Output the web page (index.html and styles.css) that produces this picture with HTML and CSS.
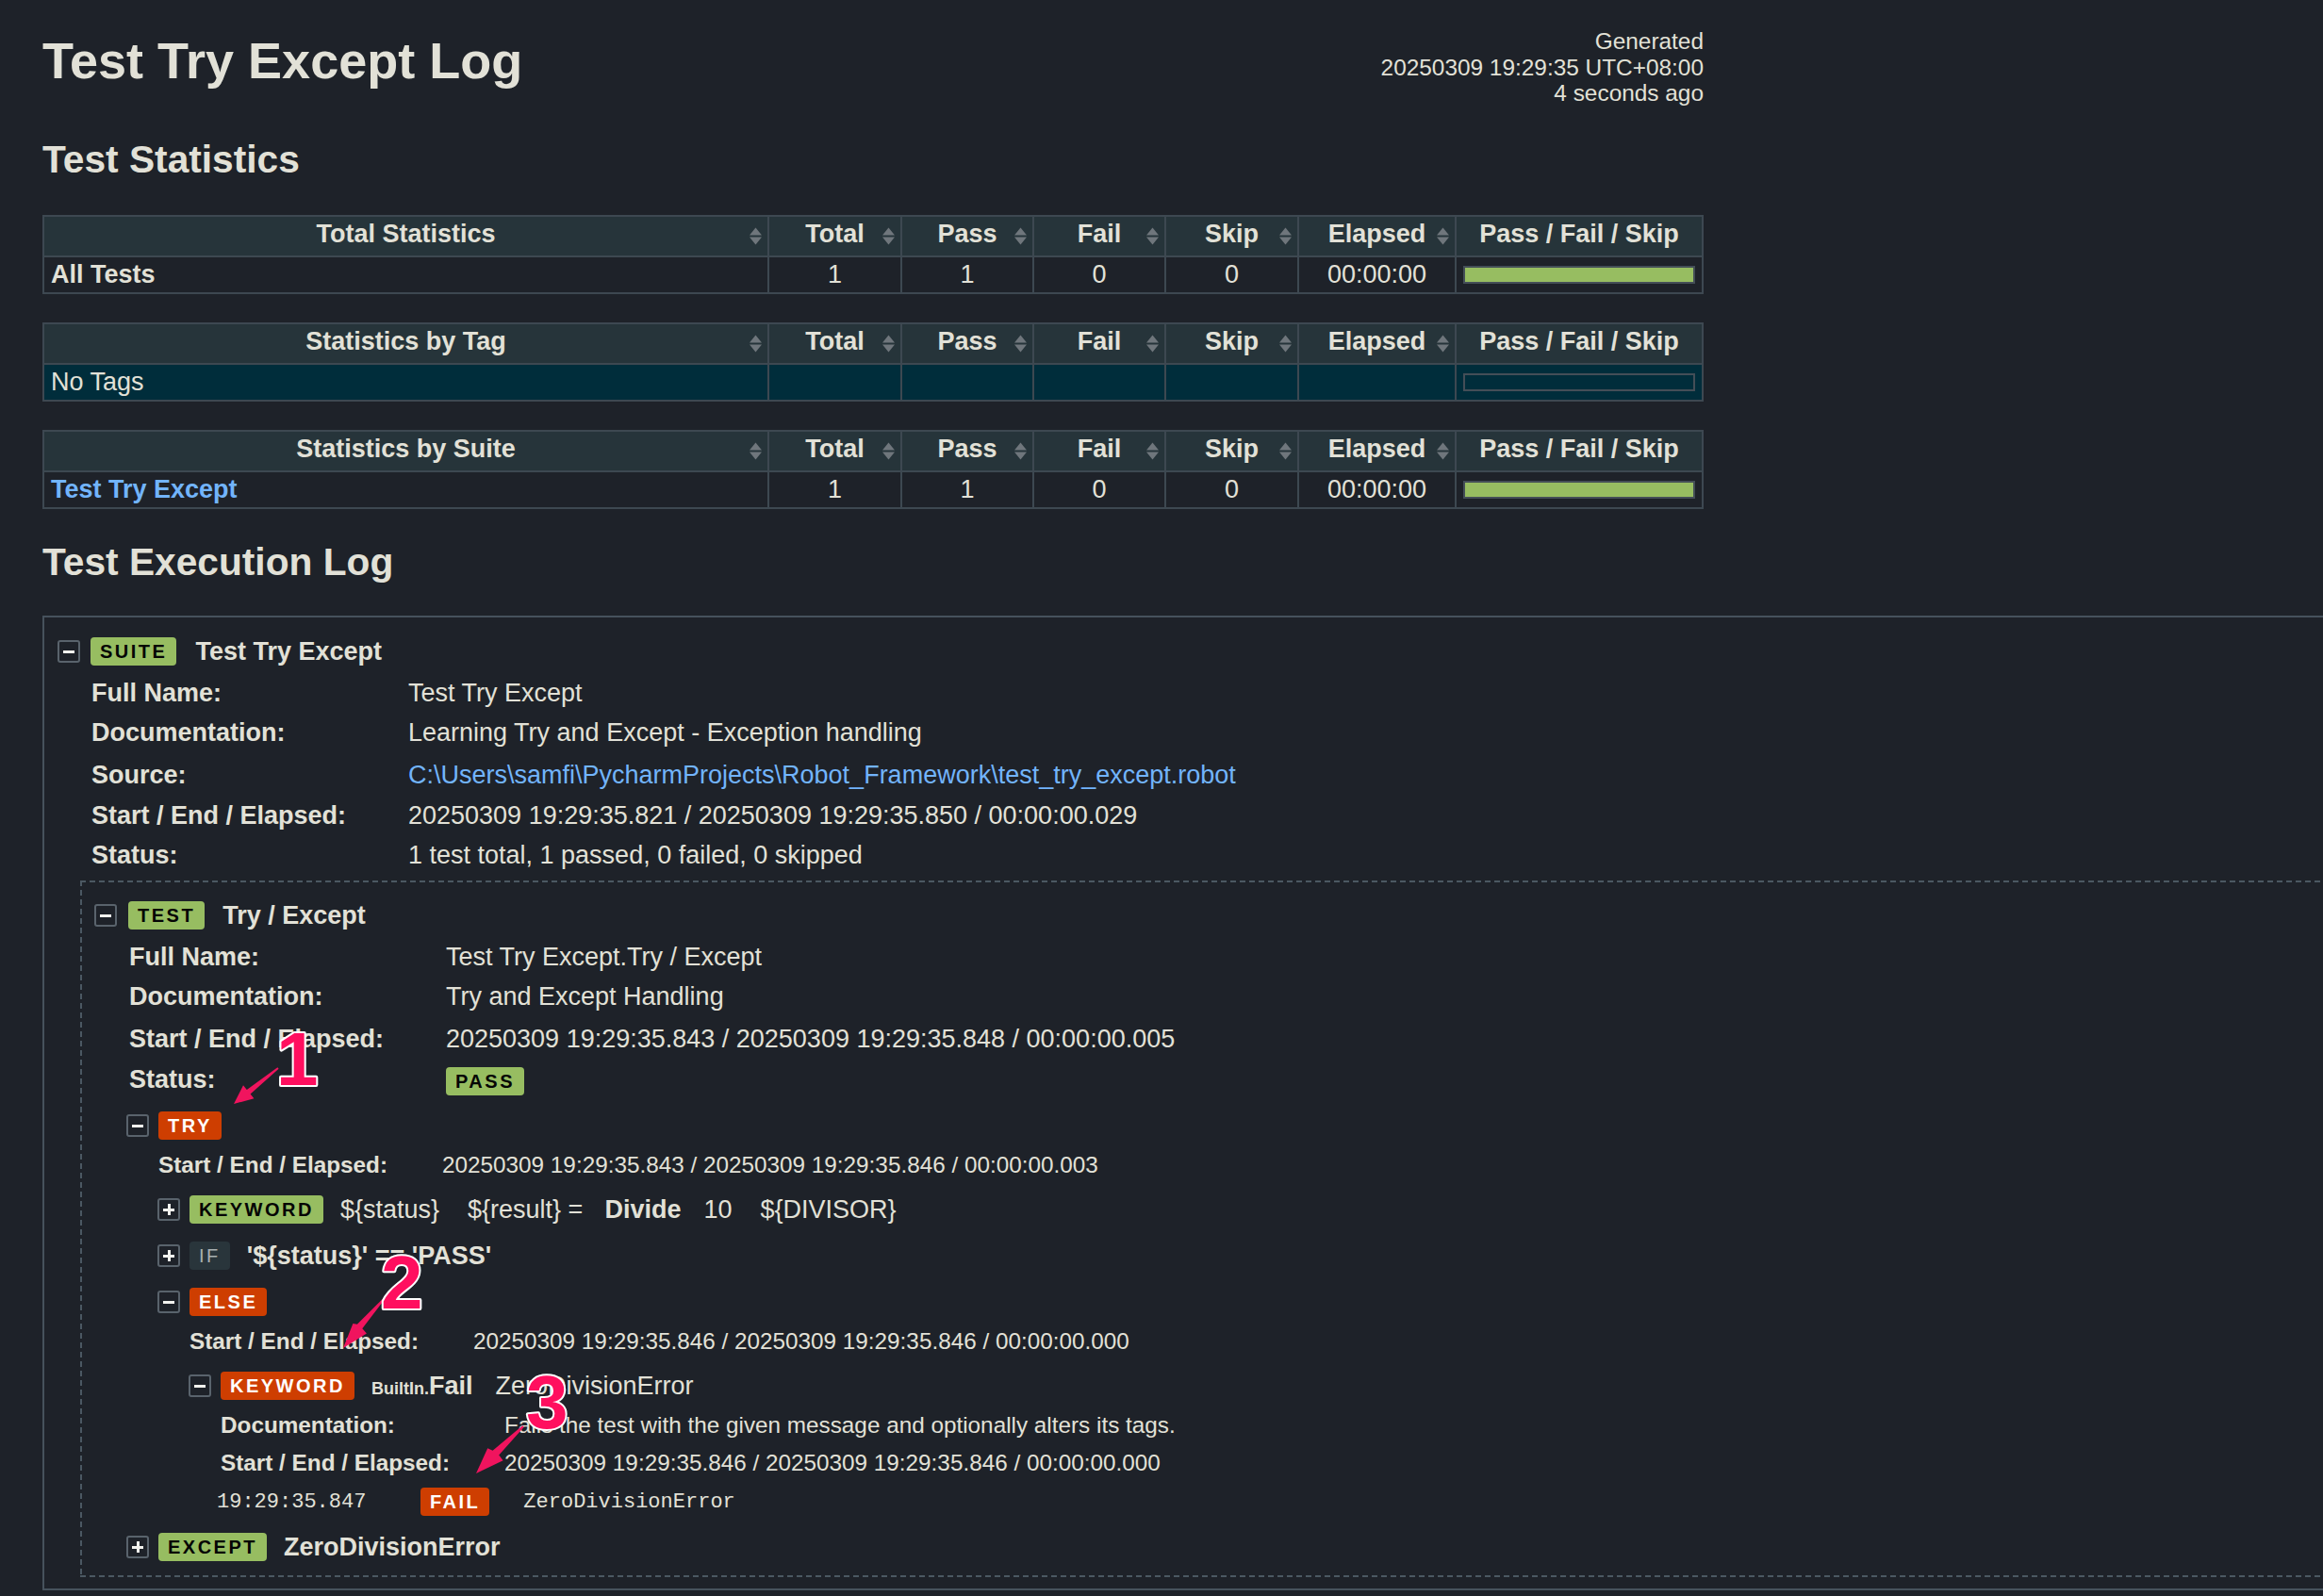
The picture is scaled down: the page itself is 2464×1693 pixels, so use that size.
FILE: index.html
```html
<!DOCTYPE html>
<html lang="en">
<head>
<meta charset="utf-8">
<title>Test Try Except Log</title>
<link rel="stylesheet" href="styles.css">
</head>
<body>
<div class="header">
  <h1>Test Try Except Log</h1>
  <div class="generated">Generated<br>20250309 19:29:35 UTC+08:00<br>4 seconds ago</div>
</div>

<h2 class="h-stats">Test Statistics</h2>

<table class="statistics">
  <colgroup><col><col class="c-a"><col class="c-b"><col class="c-b"><col class="c-a"><col class="c-el"><col class="c-graph"></colgroup>
  <thead><tr>
    <th>Total Statistics<svg class="sort" viewBox="0 0 15 19"><path d="M1 8.5L7.5 0.5 14 8.5zM1 10.5L7.5 18.5 14 10.5z"/></svg></th>
    <th>Total<svg class="sort" viewBox="0 0 15 19"><path d="M1 8.5L7.5 0.5 14 8.5zM1 10.5L7.5 18.5 14 10.5z"/></svg></th>
    <th>Pass<svg class="sort" viewBox="0 0 15 19"><path d="M1 8.5L7.5 0.5 14 8.5zM1 10.5L7.5 18.5 14 10.5z"/></svg></th>
    <th>Fail<svg class="sort" viewBox="0 0 15 19"><path d="M1 8.5L7.5 0.5 14 8.5zM1 10.5L7.5 18.5 14 10.5z"/></svg></th>
    <th>Skip<svg class="sort" viewBox="0 0 15 19"><path d="M1 8.5L7.5 0.5 14 8.5zM1 10.5L7.5 18.5 14 10.5z"/></svg></th>
    <th>Elapsed<svg class="sort" viewBox="0 0 15 19"><path d="M1 8.5L7.5 0.5 14 8.5zM1 10.5L7.5 18.5 14 10.5z"/></svg></th>
    <th>Pass / Fail / Skip</th>
  </tr></thead>
  <tbody><tr>
    <td class="stat-name"><b>All Tests</b></td><td>1</td><td>1</td><td>0</td><td>0</td><td>00:00:00</td><td><div class="graph"></div></td>
  </tr></tbody>
</table>

<table class="statistics">
  <colgroup><col><col class="c-a"><col class="c-b"><col class="c-b"><col class="c-a"><col class="c-el"><col class="c-graph"></colgroup>
  <thead><tr>
    <th>Statistics by Tag<svg class="sort" viewBox="0 0 15 19"><path d="M1 8.5L7.5 0.5 14 8.5zM1 10.5L7.5 18.5 14 10.5z"/></svg></th>
    <th>Total<svg class="sort" viewBox="0 0 15 19"><path d="M1 8.5L7.5 0.5 14 8.5zM1 10.5L7.5 18.5 14 10.5z"/></svg></th>
    <th>Pass<svg class="sort" viewBox="0 0 15 19"><path d="M1 8.5L7.5 0.5 14 8.5zM1 10.5L7.5 18.5 14 10.5z"/></svg></th>
    <th>Fail<svg class="sort" viewBox="0 0 15 19"><path d="M1 8.5L7.5 0.5 14 8.5zM1 10.5L7.5 18.5 14 10.5z"/></svg></th>
    <th>Skip<svg class="sort" viewBox="0 0 15 19"><path d="M1 8.5L7.5 0.5 14 8.5zM1 10.5L7.5 18.5 14 10.5z"/></svg></th>
    <th>Elapsed<svg class="sort" viewBox="0 0 15 19"><path d="M1 8.5L7.5 0.5 14 8.5zM1 10.5L7.5 18.5 14 10.5z"/></svg></th>
    <th>Pass / Fail / Skip</th>
  </tr></thead>
  <tbody><tr class="row-empty">
    <td class="stat-name">No Tags</td><td></td><td></td><td></td><td></td><td></td><td><div class="graph empty"></div></td>
  </tr></tbody>
</table>

<table class="statistics">
  <colgroup><col><col class="c-a"><col class="c-b"><col class="c-b"><col class="c-a"><col class="c-el"><col class="c-graph"></colgroup>
  <thead><tr>
    <th>Statistics by Suite<svg class="sort" viewBox="0 0 15 19"><path d="M1 8.5L7.5 0.5 14 8.5zM1 10.5L7.5 18.5 14 10.5z"/></svg></th>
    <th>Total<svg class="sort" viewBox="0 0 15 19"><path d="M1 8.5L7.5 0.5 14 8.5zM1 10.5L7.5 18.5 14 10.5z"/></svg></th>
    <th>Pass<svg class="sort" viewBox="0 0 15 19"><path d="M1 8.5L7.5 0.5 14 8.5zM1 10.5L7.5 18.5 14 10.5z"/></svg></th>
    <th>Fail<svg class="sort" viewBox="0 0 15 19"><path d="M1 8.5L7.5 0.5 14 8.5zM1 10.5L7.5 18.5 14 10.5z"/></svg></th>
    <th>Skip<svg class="sort" viewBox="0 0 15 19"><path d="M1 8.5L7.5 0.5 14 8.5zM1 10.5L7.5 18.5 14 10.5z"/></svg></th>
    <th>Elapsed<svg class="sort" viewBox="0 0 15 19"><path d="M1 8.5L7.5 0.5 14 8.5zM1 10.5L7.5 18.5 14 10.5z"/></svg></th>
    <th>Pass / Fail / Skip</th>
  </tr></thead>
  <tbody><tr>
    <td class="stat-name"><a class="link-bold" href="#s1">Test Try Except</a></td><td>1</td><td>1</td><td>0</td><td>0</td><td>00:00:00</td><td><div class="graph"></div></td>
  </tr></tbody>
</table>

<h2 class="h-exec">Test Execution Log</h2>

<div class="suite" id="s1">
  <div class="el-head suite-head">
    <span class="toggle"></span><span class="label pass">SUITE</span><span class="name">Test Try Except</span>
  </div>
  <div class="suite-body">
    <table class="metadata">
      <tr><th>Full Name:</th><td>Test Try Except</td></tr>
      <tr class="doc"><th>Documentation:</th><td>Learning Try and Except - Exception handling</td></tr>
      <tr><th>Source:</th><td><a href="#s1">C:\Users\samfi\PycharmProjects\Robot_Framework\test_try_except.robot</a></td></tr>
      <tr><th>Start / End / Elapsed:</th><td>20250309 19:29:35.821 / 20250309 19:29:35.850 / 00:00:00.029</td></tr>
      <tr><th>Status:</th><td>1 test total, 1 passed, 0 failed, 0 skipped</td></tr>
    </table>

    <div class="test">
      <div class="el-head test-head">
        <span class="toggle"></span><span class="label pass">TEST</span><span class="name">Try / Except</span>
      </div>
      <table class="metadata">
        <tr><th>Full Name:</th><td>Test Try Except.Try / Except</td></tr>
        <tr class="doc"><th>Documentation:</th><td>Try and Except Handling</td></tr>
        <tr><th>Start / End / Elapsed:</th><td>20250309 19:29:35.843 / 20250309 19:29:35.848 / 00:00:00.005</td></tr>
        <tr><th>Status:</th><td><span class="label pass">PASS</span></td></tr>
      </table>

      <div class="test-children">
        <div class="kw">
          <div class="el-head kw-head">
            <span class="toggle"></span><span class="label fail">TRY</span>
          </div>
          <table class="metadata kw-meta">
            <tr><th>Start / End / Elapsed:</th><td>20250309 19:29:35.843 / 20250309 19:29:35.846 / 00:00:00.003</td></tr>
          </table>
          <div class="kw-children">
            <div class="kw">
              <div class="el-head kw-head">
                <span class="toggle plus"></span><span class="label pass">KEYWORD</span><span class="kw-text"><span class="assign">${status}    ${result} =</span><span class="kname">Divide</span><span class="args">10    ${DIVISOR}</span></span>
              </div>
            </div>
            <div class="kw">
              <div class="el-head kw-head">
                <span class="toggle plus"></span><span class="label ctrl">IF</span><span class="kw-text"><span class="kname first">'${status}' == 'PASS'</span></span>
              </div>
            </div>
            <div class="kw">
              <div class="el-head kw-head">
                <span class="toggle"></span><span class="label fail">ELSE</span>
              </div>
              <table class="metadata kw-meta">
                <tr><th>Start / End / Elapsed:</th><td>20250309 19:29:35.846 / 20250309 19:29:35.846 / 00:00:00.000</td></tr>
              </table>
              <div class="kw-children">
                <div class="kw">
                  <div class="el-head kw-head">
                    <span class="toggle"></span><span class="label fail">KEYWORD</span><span class="kw-text"><span class="kname first"><span class="parent">BuiltIn.</span>Fail</span><span class="args">ZeroDivisionError</span></span>
                  </div>
                  <table class="metadata kw-meta">
                    <tr><th>Documentation:</th><td>Fails the test with the given message and optionally alters its tags.</td></tr>
                    <tr><th>Start / End / Elapsed:</th><td>20250309 19:29:35.846 / 20250309 19:29:35.846 / 00:00:00.000</td></tr>
                  </table>
                  <div class="msg">
                    <span class="time">19:29:35.847</span><span class="label fail">FAIL</span><span class="msg-text">ZeroDivisionError</span>
                  </div>
                </div>
              </div>
            </div>
          </div>
        </div>
        <div class="kw">
          <div class="el-head kw-head">
            <span class="toggle plus"></span><span class="label pass">EXCEPT</span><span class="kw-text"><span class="kname first">ZeroDivisionError</span></span>
          </div>
        </div>
      </div>
    </div>
  </div>
</div>

<svg class="annotations" viewBox="0 0 2464 1693" width="2464" height="1693">
  <polygon class="arrow" points="295.6,1133.8 265.6,1160.6 269.4,1165.3 248,1171 258,1151.3 261.8,1156 294.4,1132.2"/>
  <polygon class="arrow" points="407.8,1378.6 384.3,1409.2 388.9,1414.5 364,1430 374.4,1403.9 378.9,1404.7 406.2,1377.4"/>
  <polygon class="arrow" points="555.8,1513.7 529.2,1543.5 533.6,1549.2 505,1563 517.2,1536.3 522.6,1538.7 554.2,1512.3"/>
  <text class="num" x="293" y="1151">1</text>
  <text class="num" x="404" y="1388">2</text>
  <text class="num" x="558" y="1515">3</text>
</svg>
</body>
</html>
```

FILE: styles.css
```css
* {
  box-sizing: border-box;
}

html {
  overflow: hidden;
}

html, body {
  margin: 0;
}

body {
  position: relative;
  background: #1e2229;
  color: #e2e1d7;
  font-family: "Liberation Sans", Arial, Helvetica, sans-serif;
  font-size: 27px;
  padding: 30px 0 0 45px;
}

a {
  color: #72b4fb;
  text-decoration: none;
}

.link-bold {
  font-weight: bold;
}

/* Header */
.header {
  display: flex;
  justify-content: space-between;
  align-items: flex-start;
  width: 1762px;
  height: 68px;
}

.header h1 {
  margin: 0;
  font-size: 54px;
  line-height: 68px;
  font-weight: bold;
}

.generated {
  font-size: 24.4px;
  line-height: 27.5px;
  text-align: right;
  white-space: nowrap;
}

h2 {
  font-size: 40.7px;
  line-height: 48px;
  font-weight: bold;
}

.h-stats {
  margin: 47px 0 35px;
}

.h-exec {
  margin: 32px 0 33px;
}

/* Statistics */
.statistics {
  width: 1762px;
  table-layout: fixed;
  border-collapse: collapse;
  margin-bottom: 30px;
}

.statistics .c-a { width: 141px; }
.statistics .c-b { width: 140px; }
.statistics .c-el { width: 167px; }
.statistics .c-graph { width: 262px; }

.statistics th,
.statistics td {
  border: 2px solid #3d4851;
  line-height: 33px;
  white-space: nowrap;
}

.statistics th {
  position: relative;
  background: #26343a;
  font-weight: bold;
  text-align: center;
  padding: 2px 7px 6px;
}

.statistics td {
  padding: 2px 7px;
  text-align: center;
  vertical-align: middle;
}

.statistics td.stat-name {
  text-align: left;
}

.statistics .row-empty td {
  background: #002d3b;
}

.sort {
  position: absolute;
  right: 5px;
  top: 50%;
  width: 15px;
  height: 19px;
  margin-top: -10px;
  fill: #6f767c;
}

.graph {
  height: 19px;
  border: 2px solid #444e57;
  background: #97bd61;
}

.graph.empty {
  background: transparent;
}

/* Execution log */
.suite {
  border: 2px solid #46525c;
  border-right: none;
  padding: 13px 0 12px;
}

.el-head {
  display: flex;
  align-items: center;
  height: 46px;
  white-space: nowrap;
}

.suite-head {
  padding-left: 14px;
}

.suite-head .label {
  margin-left: 11px;
}

.suite-head .name {
  margin-left: 20px;
}

.test-head .label {
  margin-left: 12px;
}

.test-head .name {
  margin-left: 19px;
}

.kw-head .label {
  margin-left: 10px;
}

.name {
  font-weight: bold;
}

.toggle {
  position: relative;
  flex: none;
  width: 24px;
  height: 24px;
  border: 2px solid #59636c;
  border-radius: 3px;
}

.toggle::before {
  content: "";
  position: absolute;
  left: 4px;
  right: 4px;
  top: 8.5px;
  height: 3px;
  background: #f2f2ee;
}

.toggle.plus::after {
  content: "";
  position: absolute;
  top: 4px;
  bottom: 4px;
  left: 8.5px;
  width: 3px;
  background: #f2f2ee;
}

.label {
  display: inline-block;
  padding: 4px 10px;
  font-family: "Liberation Sans", Arial, sans-serif;
  font-size: 20px;
  line-height: 22px;
  font-weight: bold;
  letter-spacing: 2.5px;
  border-radius: 4px;
  white-space: nowrap;
}

.label.pass {
  background: #97bd61;
  color: #050505;
}

.label.fail {
  background: #ce3e01;
  color: #ffffff;
}

.label.ctrl {
  background: #29353b;
  color: #a9b1b1;
  font-weight: normal;
}

.suite-body {
  padding-left: 38px;
}

.suite-body > .metadata {
  margin-left: 12px;
}

.metadata {
  border-collapse: collapse;
}

.metadata th {
  width: 336px;
  padding: 4.75px 0;
  line-height: 33px;
  text-align: left;
  vertical-align: top;
  font-weight: bold;
  white-space: nowrap;
}

.metadata td {
  padding: 4.75px 0;
  line-height: 33px;
  vertical-align: top;
  white-space: nowrap;
}

.metadata tr.doc td {
  padding-bottom: 7.25px;
}

.test {
  margin-top: 5px;
  padding: 14px 0 9px 2px;
  background:
    repeating-linear-gradient(90deg, #4b5862 0 6px, transparent 6px 10px) left top / 100% 2px no-repeat,
    repeating-linear-gradient(90deg, #4b5862 0 6px, transparent 6px 10px) left bottom / 100% 2px no-repeat,
    repeating-linear-gradient(180deg, #4b5862 0 6px, transparent 6px 10px) left top / 2px 100% no-repeat;
}

.test-head {
  padding-left: 13px;
}

.test > .metadata {
  margin-left: 50px;
}

.test-children {
  margin-left: 47px;
  padding-top: 1.5px;
}

.kw {
  margin-top: 3px;
}

.kw > .metadata {
  margin-left: 34px;
}

.kw-meta {
  font-size: 24.3px;
}

.kw-meta th {
  width: 301px;
  padding: 4px 0 6px;
  line-height: 30px;
}

.kw-meta td {
  padding: 4px 0 6px;
  line-height: 30px;
}

.kw-children {
  margin-left: 33px;
}

.kw-text {
  margin-left: 18px;
  white-space: pre;
}

.kname {
  font-weight: bold;
  margin-left: 23px;
}

.kname.first {
  margin-left: 0;
}

.args {
  margin-left: 24px;
}

.parent {
  font-size: 18px;
}

.msg {
  display: flex;
  align-items: center;
  height: 40px;
  margin: 0 0 5px 30px;
  font-family: "Liberation Mono", "DejaVu Sans Mono", monospace;
  font-size: 22px;
  white-space: nowrap;
}

.msg .time {
  width: 216px;
}

.msg .msg-text {
  margin-left: 36px;
}

/* Annotation overlay */
.annotations {
  position: absolute;
  left: 0;
  top: 0;
  pointer-events: none;
}

.annotations .arrow {
  fill: #f0145e;
}

.annotations .num {
  font-family: "Liberation Sans", Arial, sans-serif;
  font-size: 80px;
  font-weight: bold;
  fill: #ff0f5f;
  stroke: #ffffff;
  stroke-width: 4px;
  paint-order: stroke;
  stroke-linejoin: round;
}
```
